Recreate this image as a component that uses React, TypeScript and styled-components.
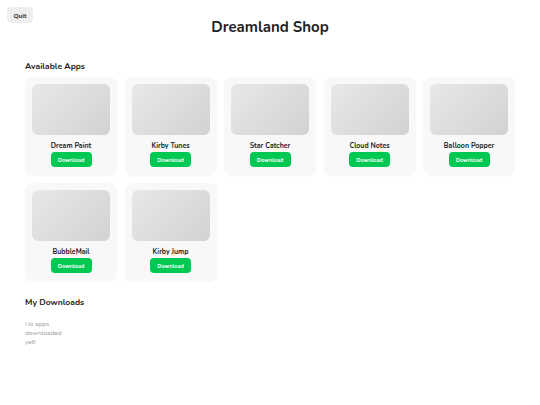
import React from "react";
import styled, { createGlobalStyle } from "styled-components";

const Global = createGlobalStyle`
  html, body { margin: 0; padding: 0; background: #ffffff; }
  body { font-family: Nunito, Lato, "Open Sans", sans-serif; color: #222222; }
  * { box-sizing: border-box; }
`;

const Page = styled.div`
  width: 540px;
  min-height: 405px;
  background: #ffffff;
`;

const Header = styled.header`
  display: grid;
  grid-template-columns: 1fr auto 1fr;
  align-items: start;
  padding: 7px 7px 0 7px;
`;

const QuitButton = styled.button`
  justify-self: start;
  width: 26px;
  height: 16px;
  padding: 0;
  border: none;
  border-radius: 4px;
  background: #eeeeee;
  color: #222222;
  font-family: inherit;
  font-size: 6.5px;
  font-weight: 700;
  cursor: pointer;
`;

const Title = styled.h1`
  margin: 0;
  padding-top: 10px;
  font-size: 15px;
  line-height: 20px;
  font-weight: 700;
  color: #222222;
`;

const Main = styled.main`
  padding: 0 25px 0 25px;
`;

const SectionTitle = styled.h2<{ $top: number }>`
  margin: ${(p) => p.$top}px 0 0 0;
  font-size: 8.5px;
  line-height: 12px;
  font-weight: 700;
  color: #222222;
`;

const Grid = styled.div`
  display: grid;
  grid-template-columns: repeat(5, 1fr);
  gap: 8px 7.5px;
  margin-top: 5px;
`;

const Card = styled.div`
  background: #f8f8f8;
  border-radius: 8px;
  padding: 7px 7px 8px 7px;
  display: flex;
  flex-direction: column;
  align-items: center;
  box-shadow: 0 1px 2px rgba(0, 0, 0, 0.03);
`;

const Thumb = styled.div`
  width: 100%;
  height: 51px;
  border-radius: 6px;
  background: linear-gradient(135deg, #e8e8e8 0%, #d2d2d2 100%);
`;

const AppName = styled.div`
  margin-top: 5px;
  font-size: 7px;
  line-height: 11px;
  font-weight: 700;
  color: #222222;
`;

const DownloadButton = styled.button`
  margin-top: 1px;
  width: 41px;
  height: 15px;
  padding: 0;
  border: none;
  border-radius: 4px;
  background: #00c853;
  color: #ffffff;
  font-family: inherit;
  font-size: 5.5px;
  font-weight: 700;
  cursor: pointer;
`;

const Empty = styled.p`
  margin: 11px 0 0 0;
  width: 48px;
  font-size: 6.5px;
  line-height: 9px;
  color: #999999;
`;

const apps = [
  "Dream Paint",
  "Kirby Tunes",
  "Star Catcher",
  "Cloud Notes",
  "Balloon Popper",
  "BubbleMail",
  "Kirby Jump",
];

export default function App() {
  return (
    <Page>
      <Global />
      <Header>
        <QuitButton>Quit</QuitButton>
        <Title>Dreamland Shop</Title>
        <span />
      </Header>
      <Main>
        <SectionTitle $top={23}>Available Apps</SectionTitle>
        <Grid>
          {apps.map((name) => (
            <Card key={name}>
              <Thumb />
              <AppName>{name}</AppName>
              <DownloadButton>Download</DownloadButton>
            </Card>
          ))}
        </Grid>
        <SectionTitle $top={15}>My Downloads</SectionTitle>
        <Empty>No apps downloaded yet!</Empty>
      </Main>
    </Page>
  );
}
